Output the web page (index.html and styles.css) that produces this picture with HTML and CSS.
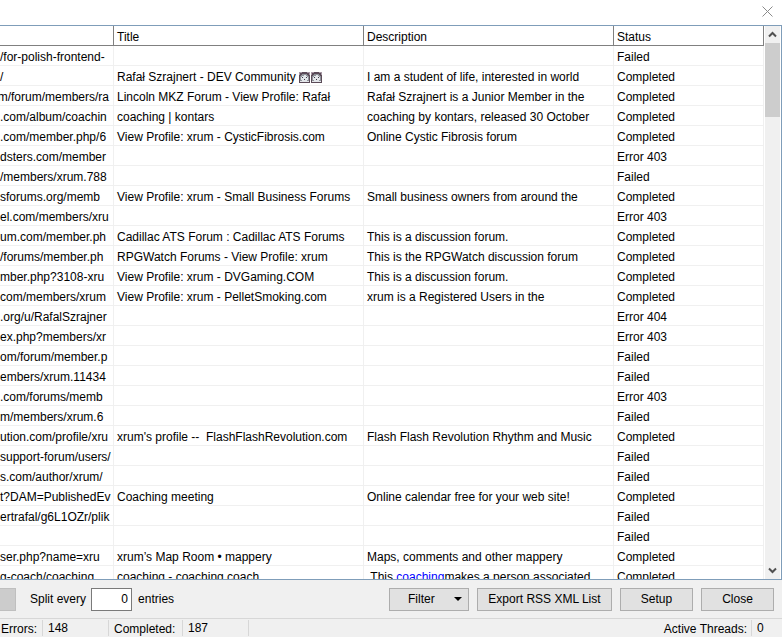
FILE: index.html
```html
<!DOCTYPE html>
<html lang="en">
<head>
<meta charset="utf-8">
<title>Results</title>
<link rel="stylesheet" href="styles.css">
</head>
<body>
<svg class="defs" aria-hidden="true">
  <symbol id="face" viewBox="0 0 11 11">
    <rect width="11" height="11" fill="#5b4b58"/>
    <path d="M0 0h3v1H1v2H0zM8 0h3v3h-1V1H8z" fill="#a89aa6"/>
    <path d="M3 2h5v1h1v1h1v5H1V4h1V3h1z" fill="#8f9299"/>
    <path d="M5 3h2v1h1v1h1v3H8v1h2v1H1V9h2V8H2V5h1V4h2z" fill="#e3e6ea"/>
    <path d="M3 5h1v1H3zM7 5h1v1H7zM5 7h1v1H5z" fill="#3d3945"/>
  </symbol>
</svg>
<header class="titlebar">
  <button class="window-close" type="button" aria-label="Close window">
    <svg width="11" height="11" viewBox="0 0 11 11"><path d="M.5.5l10 10M10.5.5l-10 10" stroke="#8a8a8a" fill="none"/></svg>
  </button>
</header>
<main class="list">
  <div class="grid">
    <table>
      <colgroup><col><col class="wide"><col class="wide"><col class="status"></colgroup>
      <thead><tr><th></th><th>Title</th><th>Description</th><th>Status</th></tr></thead>
      <tbody>
        <tr><td class="url">/for-polish-frontend-</td><td></td><td></td><td>Failed</td></tr>
        <tr><td class="url">/</td><td>Rafał Szrajnert - DEV Community <svg class="face"><use href="#face"/></svg><svg class="face"><use href="#face"/></svg></td><td>I am a student of life, interested in world</td><td>Completed</td></tr>
        <tr><td class="url long">m/forum/members/ra</td><td>Lincoln MKZ Forum - View Profile: Rafał</td><td>Rafał Szrajnert is a Junior Member in the</td><td>Completed</td></tr>
        <tr><td class="url">.com/album/coachin</td><td>coaching | kontars</td><td>coaching by kontars, released 30 October</td><td>Completed</td></tr>
        <tr><td class="url">.com/member.php/6</td><td>View Profile: xrum - CysticFibrosis.com</td><td>Online Cystic Fibrosis forum</td><td>Completed</td></tr>
        <tr><td class="url">dsters.com/member</td><td></td><td></td><td>Error 403</td></tr>
        <tr><td class="url">/members/xrum.788</td><td></td><td></td><td>Failed</td></tr>
        <tr><td class="url">sforums.org/memb</td><td>View Profile: xrum - Small Business Forums</td><td>Small business owners from around the</td><td>Completed</td></tr>
        <tr><td class="url">el.com/members/xru</td><td></td><td></td><td>Error 403</td></tr>
        <tr><td class="url">um.com/member.ph</td><td>Cadillac ATS Forum : Cadillac ATS Forums</td><td>This is a discussion forum.</td><td>Completed</td></tr>
        <tr><td class="url">/forums/member.ph</td><td>RPGWatch Forums - View Profile: xrum</td><td>This is the RPGWatch discussion forum</td><td>Completed</td></tr>
        <tr><td class="url">mber.php?3108-xru</td><td>View Profile: xrum - DVGaming.COM</td><td>This is a discussion forum.</td><td>Completed</td></tr>
        <tr><td class="url">com/members/xrum</td><td>View Profile: xrum - PelletSmoking.com</td><td>xrum is a Registered Users in the</td><td>Completed</td></tr>
        <tr><td class="url">.org/u/RafalSzrajner</td><td></td><td></td><td>Error 404</td></tr>
        <tr><td class="url">ex.php?members/xr</td><td></td><td></td><td>Error 403</td></tr>
        <tr><td class="url">om/forum/member.p</td><td></td><td></td><td>Failed</td></tr>
        <tr><td class="url">embers/xrum.11434</td><td></td><td></td><td>Failed</td></tr>
        <tr><td class="url">.com/forums/memb</td><td></td><td></td><td>Error 403</td></tr>
        <tr><td class="url">m/members/xrum.6</td><td></td><td></td><td>Failed</td></tr>
        <tr><td class="url">ution.com/profile/xru</td><td>xrum's profile --&nbsp; FlashFlashRevolution.com</td><td>Flash Flash Revolution Rhythm and Music</td><td>Completed</td></tr>
        <tr><td class="url">support-forum/users/</td><td></td><td></td><td>Failed</td></tr>
        <tr><td class="url">s.com/author/xrum/</td><td></td><td></td><td>Failed</td></tr>
        <tr><td class="url">t?DAM=PublishedEv</td><td>Coaching meeting</td><td>Online calendar free for your web site!</td><td>Completed</td></tr>
        <tr><td class="url">ertrafal/g6L1OZr/plik</td><td></td><td></td><td>Failed</td></tr>
        <tr><td class="url"></td><td></td><td></td><td>Failed</td></tr>
        <tr><td class="url">ser.php?name=xru</td><td>xrum’s Map Room • mappery</td><td>Maps, comments and other mappery</td><td>Completed</td></tr>
        <tr><td class="url">g-coach/coaching</td><td>coaching - coaching coach</td><td>&nbsp;This <a href="#">coaching</a>makes a person associated</td><td>Completed</td></tr>
      </tbody>
    </table>
  </div>
  <div class="scrollbar">
    <button type="button" aria-label="Scroll up"><svg width="9" height="7" viewBox="0 0 9 7"><path d="M1 5.5l3.500-3.500 3.500 3.500" stroke="#505050" stroke-width="2" fill="none"/></svg></button>
    <div class="thumb"></div>
    <button type="button" aria-label="Scroll down"><svg width="9" height="7" viewBox="0 0 9 7"><path d="M1 1.500l3.500 3.500 3.500-3.500" stroke="#505050" stroke-width="2" fill="none"/></svg></button>
  </div>
</main>
<section class="actions">
  <button class="cut" type="button" disabled aria-label="Export"></button>
  <label for="split">Split every</label>
  <input id="split" type="text" value="0">
  <label for="split">entries</label>
  <div class="buttons">
    <button class="filter" type="button"><span>Filter</span><svg width="8" height="4" viewBox="0 0 8 4"><path d="M0 0h8L4 4z"/></svg></button>
    <button class="export" type="button">Export RSS XML List</button>
    <button type="button">Setup</button>
    <button type="button">Close</button>
  </div>
</section>
<footer class="statusbar">
  <span class="name">Errors:</span><span class="value">148</span>
  <span class="name">Completed:</span><span class="value">187</span>
  <span class="name last">Active Threads:</span><span class="value end">0</span>
</footer>
</body>
</html>
```
FILE: styles.css
```css
* { box-sizing: border-box; }

body {
  margin: 0;
  height: 100vh;
  display: flex;
  flex-direction: column;
  overflow: hidden;
  background: #f0f0f0;
  color: #000;
  font: 12px/18px "Liberation Sans", Arial, sans-serif;
}

button, input { font: inherit; color: inherit; }
.defs { display: none; }

.titlebar {
  flex: none;
  height: 25px;
  padding-bottom: 2px;
  display: flex;
  justify-content: flex-end;
  background: #fff;
}
.window-close {
  width: 29px;
  padding: 0;
  border: 0;
  background: none;
  display: flex;
  align-items: center;
  justify-content: center;
}

.list {
  flex: 1;
  min-height: 0;
  display: flex;
  background: #fff;
  border: solid #7f9db9;
  border-width: 1px 1px 1px 0;
}
.grid { flex: 1; min-width: 0; overflow: hidden; }

table {
  width: 100%;
  table-layout: fixed;
  border-collapse: separate;
  border-spacing: 0;
}
.wide { width: 250px; }
.status { width: 150px; }

th, td {
  height: 20px;
  padding: 3px 0 0 3px;
  border: solid #f0f0f0;
  border-width: 0 1px 1px 0;
  line-height: 16px;
  font-weight: normal;
  text-align: left;
  vertical-align: top;
  white-space: pre;
  overflow: hidden;
}
th { border-color: #808080; }
td a { color: #00f; text-decoration: none; }

td.url { padding: 3px 0 0; }
td.long {
  padding-right: 4px;
  display: flex;
  justify-content: flex-end;
}

.face { width: 11px; height: 11px; margin-right: 1px; vertical-align: -2px; }

.scrollbar {
  flex: none;
  width: 15px;
  margin: 0 1px;
  display: flex;
  flex-direction: column;
  background: #f0f0f0;
}
.scrollbar button {
  height: 17px;
  padding: 0;
  border: 0;
  background: none;
  display: flex;
  align-items: center;
  justify-content: center;
}
.scrollbar button:last-child { margin-top: auto; }
.thumb { height: 74px; background: #cdcdcd; }

.actions {
  flex: none;
  height: 38px;
  padding: 0 8px 0 0;
  display: flex;
  align-items: center;
}
.actions button {
  width: 73px;
  height: 23px;
  padding: 0;
  border: 1px solid #adadad;
  background: #e1e1e1;
}
.actions .cut {
  width: 16px;
  margin-right: 14px;
  border-left: 0;
  border-color: #bfbfbf;
  background: #ccc;
}
.actions input {
  width: 41px;
  height: 23px;
  margin: 0 6px 0 5px;
  padding: 0 3px;
  border: 1px solid #7a7a7a;
  border-radius: 0;
  background: #fff;
  text-align: right;
}
.buttons { margin-left: auto; display: flex; gap: 8px; }
.actions .export { width: 135px; }
.actions .filter {
  width: 80px;
  padding: 0 6px 0 18px;
  display: flex;
  align-items: center;
  justify-content: space-between;
}

.statusbar {
  flex: none;
  height: 19px;
  padding: 1px 0 0 1px;
  border-top: 1px solid #d7d7d7;
  display: flex;
}
.statusbar span { line-height: 18px; height: 16px; white-space: nowrap; }
.value { width: 66px; padding-left: 5px; border-left: 1px solid #d7d7d7; }
.statusbar .value { line-height: 16px; }
.name { width: 41px; }
.value + .name { width: 74px; padding-left: 5px; border-left: 1px solid #d7d7d7; }
.value + .last { flex: 1; padding-right: 4px; text-align: right; }
.statusbar .end { width: 31px; }
```
